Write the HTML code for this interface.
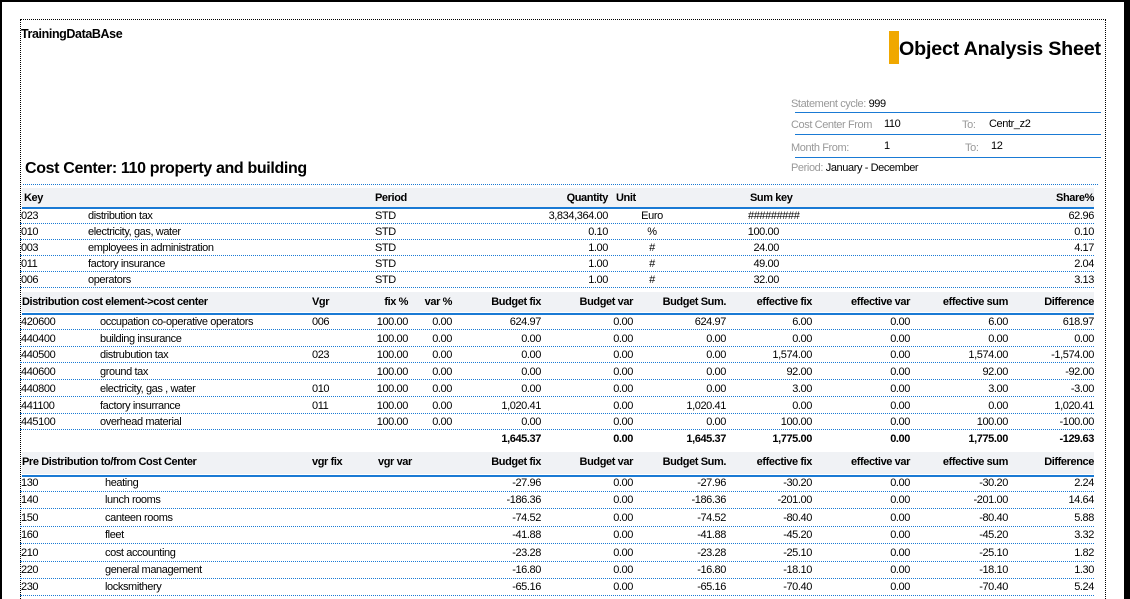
<!DOCTYPE html>
<html style="width:1130px;height:599px;overflow:hidden"><head><meta charset="utf-8"><style>
*{margin:0;padding:0;box-sizing:border-box}
body{width:1130px;height:599px;background:#fff;position:relative;overflow:hidden;font-family:"Liberation Sans",sans-serif;font-size:11px;color:#000;letter-spacing:-0.4px}
.a{position:absolute;white-space:nowrap;line-height:13px}
.r{position:absolute;white-space:nowrap;line-height:13px;text-align:right}
.b{font-weight:bold}
.band{position:absolute;left:22px;width:1072px;background:#f0f2f5}
.bl{position:absolute;left:22px;width:1072px;height:0;border-top:2px solid #1a7ad4}
.dl{position:absolute;left:20px;width:1074px;height:0;border-top:1px dotted #1a7ad4}
.g{color:#999}
</style></head><body>
<div style="position:absolute;left:0;top:0;width:1130px;height:599px;border-left:2px solid #000;border-top:2px solid #000"></div>
<div style="position:absolute;left:1124px;top:0;width:6px;height:599px;background:#000"></div>
<div style="position:absolute;left:20px;top:19px;width:1086px;height:590px;border:1px dotted #000"></div>

<div class="a b" style="left:21px;top:28px;font-size:12.5px">TrainingDataBAse</div>
<div style="position:absolute;left:889px;top:31px;width:10px;height:33px;background:#f0a800"></div>
<div class="a b" style="left:899px;top:38px;font-size:19.7px;line-height:22px;letter-spacing:-0.2px">Object Analysis Sheet</div>

<div class="a g" style="left:791px;top:98px">Statement cycle: <span style="color:#000">999</span></div>
<div style="position:absolute;left:795px;top:112px;width:306px;border-top:1px solid #1a7ad4"></div>
<div class="a g" style="left:791px;top:119px">Cost Center From</div>
<div class="a" style="left:884px;top:118px">110</div>
<div class="a g" style="left:962px;top:119px">To:</div>
<div class="a" style="left:989px;top:118px">Centr_z2</div>
<div style="position:absolute;left:795px;top:134px;width:306px;border-top:1px solid #1a7ad4"></div>
<div class="a g" style="left:791px;top:142px">Month From:</div>
<div class="a" style="left:884px;top:140px">1</div>
<div class="a g" style="left:965px;top:142px">To:</div>
<div class="a" style="left:991px;top:140px">12</div>
<div style="position:absolute;left:795px;top:157px;width:306px;border-top:1px solid #1a7ad4"></div>
<div class="a g" style="left:791px;top:162px">Period: <span style="color:#000">January - December</span></div>

<div class="a b" style="left:25px;top:160px;font-size:16px;line-height:18px;letter-spacing:-0.35px">Cost Center: 110 property and building</div>

<div class="dl" style="top:184px;left:23px;width:1075px"></div>
<div class="band" style="top:188px;height:19px"></div>
<div class="bl" style="top:207px"></div>
<div class="a b" style="left:24px;top:192px">Key</div>
<div class="a b" style="left:375px;top:192px">Period</div>
<div class="r b" style="right:522px;top:192px">Quantity</div>
<div class="a b" style="left:616px;top:192px">Unit</div>
<div class="a b" style="left:750px;top:192px">Sum key</div>
<div class="r b" style="right:36px;top:192px">Share%</div>

<div id="s1"></div>
<div id="s2"></div>
<div id="s3"></div>

<script>
function row(top,cells,line){
  let h='';
  for(const c of cells){
    if(c[2]==='r') h+=`<div class="r ${c[3]||''}" style="right:${1130-c[0]}px;top:${top}px">${c[1]}</div>`;
    else if(c[2]==='c') h+=`<div class="a ${c[3]||''}" style="left:${c[0]-40}px;width:80px;text-align:center;top:${top}px">${c[1]}</div>`;
    else h+=`<div class="a ${c[3]||''}" style="left:${c[0]}px;top:${top}px">${c[1]}</div>`;
  }
  if(line!==false) h+=`<div class="dl" style="top:${line}px"></div>`;
  return h;
}
let h='';
const s1=[["023","distribution tax","3,834,364.00","Euro","#########","62.96"],
["010","electricity, gas, water","0.10","%","100.00","0.10"],
["003","employees in administration","1.00","#","24.00","4.17"],
["011","factory insurance","1.00","#","49.00","2.04"],
["006","operators","1.00","#","32.00","3.13"]];
s1.forEach((d,i)=>{const t=209+i*16;
 h+=row(t+1,[[21,d[0]],[88,d[1]],[375,"STD"],[608,d[2],'r'],[652,d[3],'c'],[d[4][0]=='#'?748:779,d[4],d[4][0]=='#'?'':'r'],[1094,d[5],'r']],t+14);});
document.getElementById('s1').outerHTML=h;

h='<div class="band" style="top:292px;height:20px"></div><div class="bl" style="top:313px"></div>';
const C=[541,633,726,812,910,1008,1094];
const hd=["Budget fix","Budget var","Budget Sum.","effective fix","effective var","effective sum","Difference"];
let hc=[[22,"Distribution cost element-&gt;cost center",'','b'],[312,"Vgr",'','b'],[408,"fix %",'r','b'],[452,"var %",'r','b']];
hd.forEach((x,i)=>hc.push([C[i],x,'r','b']));
h+=row(296,hc,false);
const s2=[["420600","occupation co-operative operators","006","624.97","0.00","624.97","6.00","0.00","6.00","618.97"],
["440400","building insurance","","0.00","0.00","0.00","0.00","0.00","0.00","0.00"],
["440500","distrubution tax","023","0.00","0.00","0.00","1,574.00","0.00","1,574.00","-1,574.00"],
["440600","ground tax","","0.00","0.00","0.00","92.00","0.00","92.00","-92.00"],
["440800","electricity, gas , water","010","0.00","0.00","0.00","3.00","0.00","3.00","-3.00"],
["441100","factory insurrance","011","1,020.41","0.00","1,020.41","0.00","0.00","0.00","1,020.41"],
["445100","overhead material","","0.00","0.00","0.00","100.00","0.00","100.00","-100.00"]];
s2.forEach((d,i)=>{const t=315+i*16.7;let c=[[21,d[0]],[100,d[1]],[312,d[2]],[408,"100.00",'r'],[452,"0.00",'r']];
 for(let k=0;k<7;k++)c.push([C[k],d[3+k],'r']);h+=row(t+1,c,t+14);});
let tc=[];["1,645.37","0.00","1,645.37","1,775.00","0.00","1,775.00","-129.63"].forEach((x,k)=>tc.push([C[k],x,'r','b']));
h+=row(433,tc,false);
document.getElementById('s2').outerHTML=h;

h='<div class="band" style="top:452px;height:22px"></div><div class="bl" style="top:475px"></div>';
hc=[[22,"Pre Distribution to/from Cost Center",'','b'],[312,"vgr fix",'','b'],[378,"vgr var",'','b']];
hd.forEach((x,i)=>hc.push([C[i],x,'r','b']));
h+=row(456,hc,false);
const s3=[["130","heating","-27.96","0.00","-27.96","-30.20","0.00","-30.20","2.24"],
["140","lunch rooms","-186.36","0.00","-186.36","-201.00","0.00","-201.00","14.64"],
["150","canteen rooms","-74.52","0.00","-74.52","-80.40","0.00","-80.40","5.88"],
["160","fleet","-41.88","0.00","-41.88","-45.20","0.00","-45.20","3.32"],
["210","cost accounting","-23.28","0.00","-23.28","-25.10","0.00","-25.10","1.82"],
["220","general management","-16.80","0.00","-16.80","-18.10","0.00","-18.10","1.30"],
["230","locksmithery","-65.16","0.00","-65.16","-70.40","0.00","-70.40","5.24"]];
s3.forEach((d,i)=>{const t=476+i*17.4;let c=[[21,d[0]],[105,d[1]]];
 for(let k=0;k<7;k++)c.push([C[k],d[2+k],'r']);h+=row(t+1,c,t+15);});
document.getElementById('s3').outerHTML=h;
</script>
</body></html>
